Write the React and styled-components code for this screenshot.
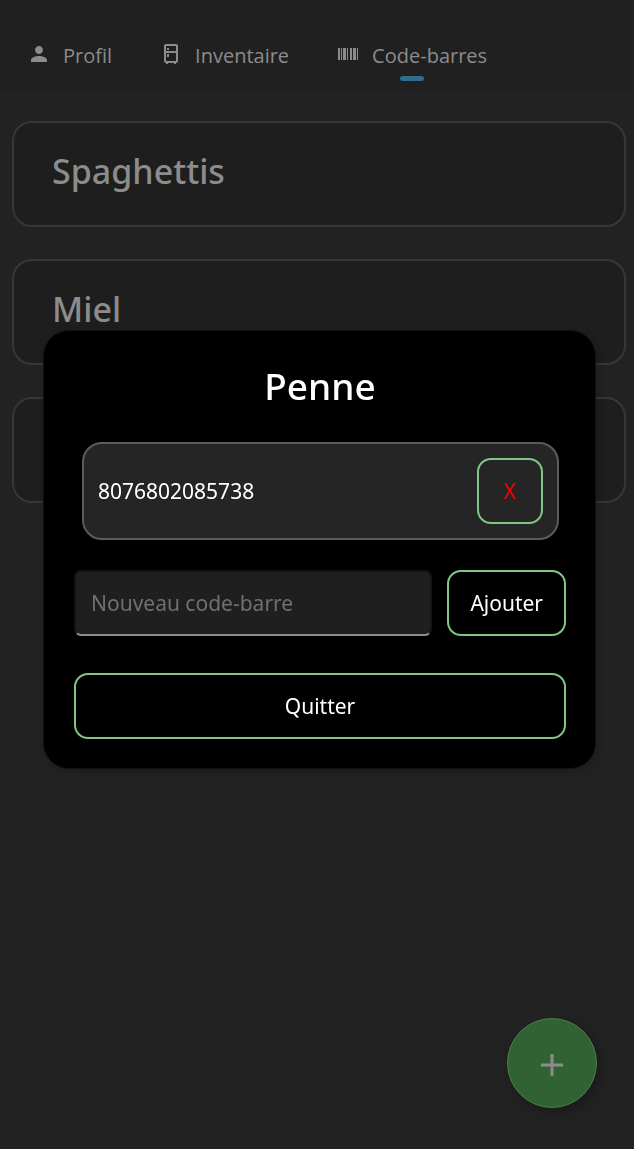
import { useState } from "react";
import styled, { createGlobalStyle } from "styled-components";

const GlobalStyle = createGlobalStyle`
    *{
        box-sizing:border-box;
    }
    body{
        margin:0;
        background:#222222;
        font-family:"Noto Sans", sans-serif;
    }
    button, input{
        font-family:inherit;
        font-size:21px;
    }
`;

const Page = styled.div`
    min-height:100vh;
    background:#222222;
`;

const NavBar = styled.nav`
    display:flex;
    align-items:center;
    gap:47px;
    height:90px;
    padding:20px 27px 0;
    background:#202020;
`;

const NavLink = styled.a`
    position:relative;
    display:flex;
    align-items:center;
    gap:12px;
    height:52px;
    color:#8c8c8c;
    font-family:"Open Sans", sans-serif;
    font-size:20px;
    text-decoration:none;
    & svg{
        width:24px;
        height:24px;
        margin-bottom:2px;
        fill:currentColor;
    }
`;

const ActiveMark = styled.span`
    position:absolute;
    bottom:0;
    left:50%;
    width:24px;
    height:5px;
    margin-left:-12px;
    border-radius:3px;
    background:#2e6d8d;
`;

const ProductList = styled.main`
    display:flex;
    flex-direction:column;
    gap:32px;
    padding:31px 8px 31px 12px;
`;

const ProductCard = styled.section`
    height:106px;
    padding:24px 38px;
    border:2px solid #373737;
    border-radius:20px;
    background:#1e1e1e;
`;

const ProductName = styled.h2`
    margin:0;
    color:#8c8c8c;
    font-size:34px;
    font-weight:500;
    line-height:48px;
`;

const AddProduct = styled.button`
    position:fixed;
    right:37px;
    bottom:41px;
    display:flex;
    align-items:center;
    justify-content:center;
    width:90px;
    height:90px;
    padding:4px 0 0;
    border:1px solid #507c52;
    border-radius:50%;
    background:#316233;
    color:#8c8c8c;
    box-shadow:4px 4px 12px rgba(0, 0, 0, 0.25);
    & svg{
        width:22px;
        height:22px;
    }
`;

const Overlay = styled.div`
    position:fixed;
    inset:0;
    display:flex;
    align-items:center;
    justify-content:center;
    padding:0 38px 50px 43px;
`;

const Dialog = styled.div`
    display:flex;
    flex-direction:column;
    width:100%;
    padding:30px 29px 29px 30px;
    border:1px solid #111111;
    border-radius:26px;
    background:#000000;
    box-shadow:2px 2px 8px rgba(0, 0, 0, 0.2);
`;

const DialogTitle = styled.h1`
    margin:0;
    color:#ffffff;
    font-size:37px;
    font-weight:500;
    line-height:50px;
    text-align:center;
`;

const CodeRow = styled.div`
    display:flex;
    align-items:center;
    justify-content:space-between;
    height:98px;
    margin:31px 7px 30px 8px;
    padding:0 14px;
    border:2px solid #5b5b5b;
    border-radius:20px;
    background:#252525;
    color:#ffffff;
    font-size:21px;
`;

const Button = styled.button`
    height:66px;
    padding:0 21px;
    border:2px solid #81c784;
    border-radius:14px;
    background:transparent;
    color:#ffffff;
`;

const RemoveButton = styled(Button)`
    width:66px;
    padding:0;
    color:#ff0000;
`;

const AddForm = styled.form`
    display:flex;
    gap:15px;
    margin-bottom:37px;
`;

const CodeInput = styled.input`
    flex:1;
    min-width:0;
    height:66px;
    padding:0 15px;
    border:2px solid #141414;
    border-bottom-color:#8c8c8c;
    border-radius:7px;
    outline:none;
    background:#1f1f1f;
    color:#ffffff;
    &::placeholder{
        color:#707070;
        opacity:1;
    }
`;

const PersonIcon = () => (
    <svg viewBox="0 0 24 24" aria-hidden="true">
        <path d="M12 12c2.21 0 4-1.79 4-4s-1.79-4-4-4-4 1.79-4 4 1.79 4 4 4zm0 2c-2.67 0-8 1.34-8 4v2h16v-2c0-2.66-5.33-4-8-4z"/>
    </svg>
);

const FridgeIcon = () => (
    <svg viewBox="0 0 24 24" aria-hidden="true">
        <path fillRule="evenodd" d="M7 2h10a2 2 0 0 1 2 2v15a2 2 0 0 1-2 2v1h-2v-1H9v1H7v-1a2 2 0 0 1-2-2V4a2 2 0 0 1 2-2zM7 4v5h10V4zM7 11v8h10v-8z"/>
        <path d="M8 6h2v2H8zM8 12h2v3H8z"/>
    </svg>
);

const BarcodeIcon = () => (
    <svg viewBox="0 0 24 24" aria-hidden="true">
        <path d="M2 6h2v12H2zM5 6h1v12H5zM7 6h3v12H7zM11 6h1v12h-1zM14 6h2v12h-2zM17 6h3v12h-3zM21 6h1v12h-1z"/>
    </svg>
);

const CodeDialog = (props) =>{
    const [newCode, setNewCode] = useState("");

    const addCode = (e) =>{
        e.preventDefault();
        if(newCode){
            props.addCode(newCode);
            setNewCode("");
        }
    };

    return (
        <Overlay>
            <Dialog role="dialog" aria-labelledby="dialog-title">
                <DialogTitle id="dialog-title">Penne</DialogTitle>
                {props.codes.map((code) => (
                    <CodeRow key={code}>
                        {code}
                        <RemoveButton type="button" onClick={() => props.removeCode(code)}>X</RemoveButton>
                    </CodeRow>
                ))}
                <AddForm onSubmit={addCode}>
                    <CodeInput aria-label="Nouveau code-barre" placeholder="Nouveau code-barre" value={newCode} onChange={(e) => setNewCode(e.target.value)}/>
                    <Button type="submit">Ajouter</Button>
                </AddForm>
                <Button type="button" onClick={props.close}>Quitter</Button>
            </Dialog>
        </Overlay>
    )
};

const App = () =>{
    const [isOpen, setOpen] = useState(true);
    const [codes, setCodes] = useState(["8076802085738"]);

    return (
        <Page>
            <GlobalStyle/>
            <NavBar>
                <NavLink href="#profil"><PersonIcon/>Profil</NavLink>
                <NavLink href="#inventaire"><FridgeIcon/>Inventaire</NavLink>
                <NavLink href="#code-barres"><BarcodeIcon/>Code-barres<ActiveMark/></NavLink>
            </NavBar>
            <ProductList>
                <ProductCard><ProductName>Spaghettis</ProductName></ProductCard>
                <ProductCard><ProductName>Miel</ProductName></ProductCard>
                <ProductCard/>
            </ProductList>
            <AddProduct type="button" aria-label="Ajouter un produit" onClick={() => setOpen(true)}>
                <svg viewBox="0 0 22 22" aria-hidden="true">
                    <path fill="none" stroke="currentColor" strokeWidth="3" d="M11 0v22M0 11h22"/>
                </svg>
            </AddProduct>
            {isOpen && (
                <CodeDialog
                    codes={codes}
                    addCode={(code) => setCodes([...codes, code])}
                    removeCode={(code) => setCodes(codes.filter((c) => c !== code))}
                    close={() => setOpen(false)}
                />
            )}
        </Page>
    )
};

export default App;
